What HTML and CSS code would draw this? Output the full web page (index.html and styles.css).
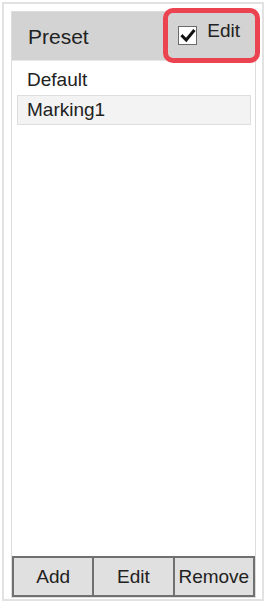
FILE: index.html
```html
<!DOCTYPE html>
<html lang="en">
<head>
  <meta charset="UTF-8">
  <meta name="viewport" content="width=device-width, initial-scale=1.0">
  <title>Preset</title>
  <link rel="stylesheet" href="styles.css">
</head>
<body>
  <div class="frame">
    <div class="panel">
      <div class="panel-header">
        <span class="panel-title">Preset</span>
        <label class="edit-toggle">
          <span class="check">
            <svg width="16" height="16" viewBox="0 0 16 16">
              <path d="M2.5 8.2 L6.2 12 L13.5 3.2" fill="none" stroke="#111" stroke-width="3" stroke-linecap="square" stroke-linejoin="miter"/>
            </svg>
          </span>
          <span class="edit-text">Edit</span>
        </label>
        <div class="highlight"></div>
      </div>

      <ul class="preset-list">
        <li>Default</li>
        <li class="selected">Marking1</li>
      </ul>

      <div class="button-row">
        <button>Add</button>
        <button>Edit</button>
        <button>Remove</button>
      </div>
    </div>
  </div>
</body>
</html>
```

FILE: styles.css
```css
/* mise en page du panneau */
body {
  margin: 0;
  background: #fff;
  font-family: "Liberation Sans", Arial, sans-serif;
  color: #222;
}

.frame {
  margin: 2px 0 0 2px;
  width: 262px;
  height: 599px;
  border: 2px solid #e2e2e2;
  padding: 7px 6px 1px 7px;
  box-sizing: border-box;
}

.panel {
  height: 100%;
  border: 1px solid #dcdcdc;
  box-sizing: border-box;
  display: flex;
  flex-direction: column;
}

.panel-header {
  position: relative;
  height: 48px;
  background: #d3d3d3;
  display: flex;
  align-items: center;
  border-bottom: 1px solid #e8e8e8;
}

.panel-title {
  font-size: 21px;
  padding-left: 16px;
  padding-top: 2px;
}

.edit-toggle {
  margin-left: auto;
  margin-right: 15px;
  margin-bottom: 10px;
  display: flex;
  align-items: center;
}

.check {
  width: 17px;
  height: 17px;
  border: 1.5px solid #6a6a6a;
  background: #fff;
  display: flex;
  align-items: center;
  justify-content: center;
  margin-top: 9px;
}

.edit-text {
  font-size: 19px;
  margin-left: 10px;
}

.highlight {
  position: absolute;
  left: 151px;
  top: -4px;
  width: 97px;
  height: 55px;
  border: 5px solid #ec4350;
  border-radius: 10px;
  box-sizing: border-box;
}

.preset-list {
  list-style: none;
  margin: 0;
  padding: 4px 4px 0 5px;
}

.preset-list li {
  font-size: 19px;
  height: 28px;
  line-height: 28px;
  padding-left: 9px;
  border: 1px solid transparent;
}

.preset-list li.selected {
  background: #f3f3f3;
  border-color: #dedede;
}

.button-row {
  margin-top: auto;
  display: flex;
  border: 1px solid #707070;
}

.button-row button {
  flex: 1;
  height: 39px;
  font-family: inherit;
  font-size: 19px;
  color: #222;
  background: #e0e0e0;
  border: 1px solid #707070;
  padding: 0;
}
```
